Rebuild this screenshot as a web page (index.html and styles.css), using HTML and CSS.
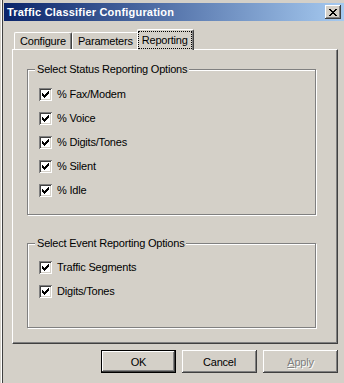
FILE: index.html
```html
<!DOCTYPE html>
<html lang="en">
    <head>
        <meta charset="UTF-8">
        <title>Traffic Classifier Configuration</title>
        <link rel="stylesheet" href="styles.css">
    </head>

    <body>
        <div class="window">
            <div class="titlebar">
                <span class="title">Traffic Classifier Configuration</span>
                <button class="close">
                    <svg width="8" height="7" viewBox="0 0 8 7">
                        <path d="M0 0h2v1h-2z M6 0h2v1h-2z M1 1h2v1h-2z M5 1h2v1h-2z M2 2h4v1h-4z M3 3h2v1h-2z M2 4h4v1h-4z M1 5h2v1h-2z M5 5h2v1h-2z M0 6h2v1h-2z M6 6h2v1h-2z" fill="#000"/>
                    </svg>
                </button>
            </div>

            <div class="content">
                <div class="tabs">
                    <div class="tab">Configure</div>
                    <div class="tab">Parameters</div>
                    <div class="tab active"><span class="focus">Reporting</span></div>
                </div>

                <div class="panel">
                    <fieldset class="group status">
                        <legend>Select Status Reporting Options</legend>
                        <label class="check"><span class="box"></span>% Fax/Modem</label>
                        <label class="check"><span class="box"></span>% Voice</label>
                        <label class="check"><span class="box"></span>% Digits/Tones</label>
                        <label class="check"><span class="box"></span>% Silent</label>
                        <label class="check"><span class="box"></span>% Idle</label>
                    </fieldset>

                    <fieldset class="group events">
                        <legend>Select Event Reporting Options</legend>
                        <label class="check"><span class="box"></span>Traffic Segments</label>
                        <label class="check"><span class="box"></span>Digits/Tones</label>
                    </fieldset>
                </div>

                <div class="buttons">
                    <button class="btn default">OK</button>
                    <button class="btn">Cancel</button>
                    <button class="btn disabled"><u>A</u>pply</button>
                </div>
            </div>
        </div>

        <script>
            // every box on this page is ticked
            const tick = '<svg width="13" height="13" viewBox="0 0 13 13"><path d="M3 5h1v3h-1z M4 6h1v3h-1z M5 7h1v3h-1z M6 6h1v3h-1z M7 5h1v3h-1z M8 4h1v3h-1z M9 3h1v3h-1z" fill="#000"/></svg>';
            document.querySelectorAll(".box").forEach((box) => {
                box.innerHTML = tick;
            });
        </script>
    </body>
</html>
```

FILE: styles.css
```css
*{
    box-sizing: border-box;
}
body{
    margin: 0;
    width: 344px;
    height: 383px;
    overflow: hidden;
    background-color: #d4d0c8;
    font-family: "Liberation Sans", Arial, sans-serif;
    font-size: 11px;
    letter-spacing: -0.2px;
    color: #000;
}
.window{
    height: 383px;
    padding: 3px 0 0 4px;
    box-shadow: inset 1px 0 #d4d0c8, inset 2px 0 #ffffff, inset 3px 0 #404040;
}
.titlebar{
    display: flex;
    align-items: center;
    justify-content: space-between;
    height: 18px;
    padding: 0 3px;
    background: linear-gradient(to right, #0a246a, #a6caf0);
    color: #fff;
    font-weight: bold;
    letter-spacing: 0.2px;
}
.close{
    display: flex;
    align-items: center;
    justify-content: center;
    width: 16px;
    height: 14px;
    padding: 0;
    border: none;
    background-color: #d4d0c8;
    box-shadow: inset -1px -1px #404040, inset 1px 1px #fff, inset -2px -2px #808080;
}
.content{
    padding: 8px 0 0 8px;
}
.tabs{
    display: flex;
    align-items: flex-end;
    height: 20px;
    padding-left: 2px;
    position: relative;
    z-index: 1;
}
.tab{
    height: 17px;
    padding: 0 5px;
    line-height: 16px;
    border: 1px solid;
    border-color: #fff #404040 transparent #fff;
    border-bottom: none;
    border-radius: 2px 2px 0 0;
    box-shadow: inset -1px 0 #808080;
    background-color: #d4d0c8;
}
.tab.active{
    height: 21px;
    margin: 0 -2px -1px -2px;
    padding: 1px 1px 0 0;
}
.focus{
    display: block;
    height: 18px;
    padding: 0 3px;
    line-height: 16px;
    border: 1px dotted #000;
}
.panel{
    width: 326px;
    height: 295px;
    padding: 13px 0 0 14px;
    border: 1px solid;
    border-color: #fff #404040 #404040 #fff;
    box-shadow: inset -1px -1px #808080;
}
.group{
    width: 289px;
    margin: 0;
    padding: 0 0 0 7px;
    border: 1px solid #808080;
    box-shadow: 1px 1px #fff, inset 1px 1px #fff;
}
.group legend{
    padding: 0 2px;
    line-height: 13px;
    background-color: #d4d0c8;
}
.status{
    padding-top: 6px;
    padding-bottom: 12px;
}
.events{
    margin-top: 22px;
    padding-top: 5px;
    padding-bottom: 24px;
}
.check{
    display: flex;
    align-items: center;
    height: 24px;
    padding-left: 4px;
}
.box{
    width: 13px;
    height: 13px;
    margin-right: 5px;
    background-color: #fff;
    box-shadow: inset 1px 1px #808080, inset -1px -1px #fff, inset 2px 2px #404040, inset -2px -2px #d4d0c8;
}
.box svg{
    display: block;
}
.buttons{
    display: flex;
    justify-content: flex-end;
    gap: 6px;
    padding: 6px 6px 0 0;
}
.btn{
    width: 75px;
    height: 23px;
    padding: 0;
    border: none;
    font: inherit;
    letter-spacing: inherit;
    color: #000;
    background-color: #d4d0c8;
    box-shadow: inset -1px -1px #404040, inset 1px 1px #fff, inset -2px -2px #808080;
}
.btn.default{
    box-shadow: inset 0 0 0 1px #000, inset -2px -2px #404040, inset 2px 2px #fff, inset -3px -3px #808080;
}
.btn.disabled{
    color: #808080;
    text-shadow: 1px 1px #fff;
}
```
